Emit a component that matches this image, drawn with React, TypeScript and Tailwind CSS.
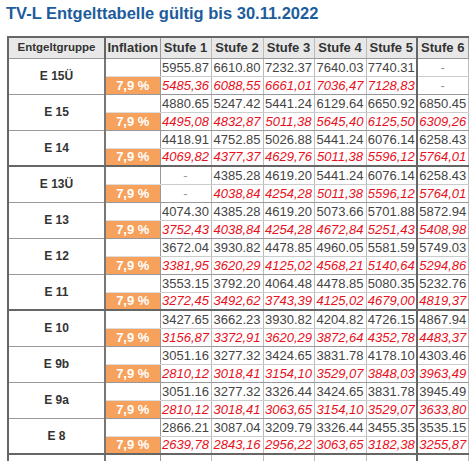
const STUFEN = ["Stufe 1", "Stufe 2", "Stufe 3", "Stufe 4", "Stufe 5", "Stufe 6"];

type Gruppe = { name: string; alt: string[]; neu: string[]; thick?: boolean };

const GRUPPEN: Gruppe[] = [
  {
    name: "E 15Ü",
    alt: ["5955.87", "6610.80", "7232.37", "7640.03", "7740.31", "-"],
    neu: ["5485,36", "6088,55", "6661,01", "7036,47", "7128,83", "-"],
  },
  {
    name: "E 15",
    alt: ["4880.65", "5247.42", "5441.24", "6129.64", "6650.92", "6850.45"],
    neu: ["4495,08", "4832,87", "5011,38", "5645,40", "6125,50", "6309,26"],
  },
  {
    name: "E 14",
    alt: ["4418.91", "4752.85", "5026.88", "5441.24", "6076.14", "6258.43"],
    neu: ["4069,82", "4377,37", "4629,76", "5011,38", "5596,12", "5764,01"],
    thick: true,
  },
  {
    name: "E 13Ü",
    alt: ["-", "4385.28", "4619.20", "5441.24", "6076.14", "6258.43"],
    neu: ["-", "4038,84", "4254,28", "5011,38", "5596,12", "5764,01"],
  },
  {
    name: "E 13",
    alt: ["4074.30", "4385.28", "4619.20", "5073.66", "5701.88", "5872.94"],
    neu: ["3752,43", "4038,84", "4254,28", "4672,84", "5251,43", "5408,98"],
  },
  {
    name: "E 12",
    alt: ["3672.04", "3930.82", "4478.85", "4960.05", "5581.59", "5749.03"],
    neu: ["3381,95", "3620,29", "4125,02", "4568,21", "5140,64", "5294,86"],
  },
  {
    name: "E 11",
    alt: ["3553.15", "3792.20", "4064.48", "4478.85", "5080.35", "5232.76"],
    neu: ["3272,45", "3492,62", "3743,39", "4125,02", "4679,00", "4819,37"],
    thick: true,
  },
  {
    name: "E 10",
    alt: ["3427.65", "3662.23", "3930.82", "4204.82", "4726.15", "4867.94"],
    neu: ["3156,87", "3372,91", "3620,29", "3872,64", "4352,78", "4483,37"],
  },
  {
    name: "E 9b",
    alt: ["3051.16", "3277.32", "3424.65", "3831.78", "4178.10", "4303.46"],
    neu: ["2810,12", "3018,41", "3154,10", "3529,07", "3848,03", "3963,49"],
  },
  {
    name: "E 9a",
    alt: ["3051.16", "3277.32", "3326.44", "3424.65", "3831.78", "3945.49"],
    neu: ["2810,12", "3018,41", "3063,65", "3154,10", "3529,07", "3633,80"],
  },
  {
    name: "E 8",
    alt: ["2866.21", "3087.04", "3209.79", "3326.44", "3455.35", "3535.15"],
    neu: ["2639,78", "2843,16", "2956,22", "3063,65", "3182,38", "3255,87"],
    thick: true,
  },
];

const COL_W = ["w-[51px]", "w-[52px]", "w-[51px]", "w-[52px]", "w-[51px]", "w-[51px]"];

function numCell(i: number, value: string, red: boolean, bottom: string) {
  const left = i === 5 ? "border-l-2 border-l-[#666]" : "border-l border-l-[#bbb]";
  const color = value === "-" ? "text-[#999] not-italic" : red ? "text-[#e8101c] italic" : "text-[#444]";
  return (
    <td key={i} className={`h-[18px] p-0 text-center leading-none border-r border-r-[#bbb] ${left} ${bottom} ${color}`}>
      {value}
    </td>
  );
}

export default function App() {
  return (
    <div className="w-[474px] h-[461px] overflow-hidden bg-white font-['Liberation_Sans',Arial,sans-serif]">
      <h1 className="pl-[6px] pt-[3px] h-[36px] text-[16.5px] leading-[20px] font-bold text-[#1d5c9c]">
        TV-L Entgelttabelle gültig bis 30.11.2022
      </h1>
      <table className="ml-[7px] border-collapse table-fixed w-[461px] text-[13px]">
        <thead>
          <tr className="bg-[#e8e8e8]">
            <th className="w-[97px] h-[18px] p-0 text-[11.5px] font-bold text-[#333] border-2 border-[#666] border-b border-b-[#999]">
              Entgeltgruppe
            </th>
            <th className="w-[55px] p-0 font-bold text-[#333] border-2 border-[#666] border-b border-b-[#999] border-r border-r-[#999]">
              Inflation
            </th>
            {STUFEN.map((s, i) => (
              <th
                key={s}
                className={`${COL_W[i]} p-0 font-bold text-[#333] border-t-2 border-t-[#666] border-b border-b-[#999] ${
                  i === 5 ? "border-l-2 border-l-[#666] border-r border-r-[#999]" : "border-x border-x-[#bbb]"
                }`}
              >
                {s}
              </th>
            ))}
          </tr>
        </thead>
        <tbody>
          {GRUPPEN.map((g) => {
            const groupBottom = g.thick ? "border-b-2 border-b-[#666]" : "border-b border-b-[#999]";
            return [
              <tr key={g.name + "a"}>
                <td
                  rowSpan={2}
                  className={`p-0 text-center text-[12px] font-bold text-[#333] border-l-2 border-l-[#666] border-r-2 border-r-[#777] ${groupBottom}`}
                >
                  {g.name}
                </td>
                <td className="p-0 h-[18px] border-r border-r-[#999] border-b border-b-[#ddd]" />
                {g.alt.map((v, i) => numCell(i, v, false, "border-b border-b-[#ccc]"))}
              </tr>,
              <tr key={g.name + "b"}>
                <td className={`p-0 h-[18px] text-center bg-[#f6a25c] text-white font-bold leading-none border-r border-r-[#999] ${groupBottom}`}>
                  7,9 %
                </td>
                {g.neu.map((v, i) => numCell(i, v, true, groupBottom))}
              </tr>,
            ];
          })}
          {/* nächste Gruppe, unten abgeschnitten */}
          <tr>
            <td className="h-[18px] p-0 border-l-2 border-l-[#666] border-r-2 border-r-[#777]" />
            <td className="p-0 border-r border-r-[#999]" />
            {COL_W.map((_, i) => (
              <td key={i} className={`p-0 border-r border-r-[#bbb] ${i === 5 ? "border-l-2 border-l-[#666]" : "border-l border-l-[#bbb]"}`} />
            ))}
          </tr>
        </tbody>
      </table>
    </div>
  );
}
